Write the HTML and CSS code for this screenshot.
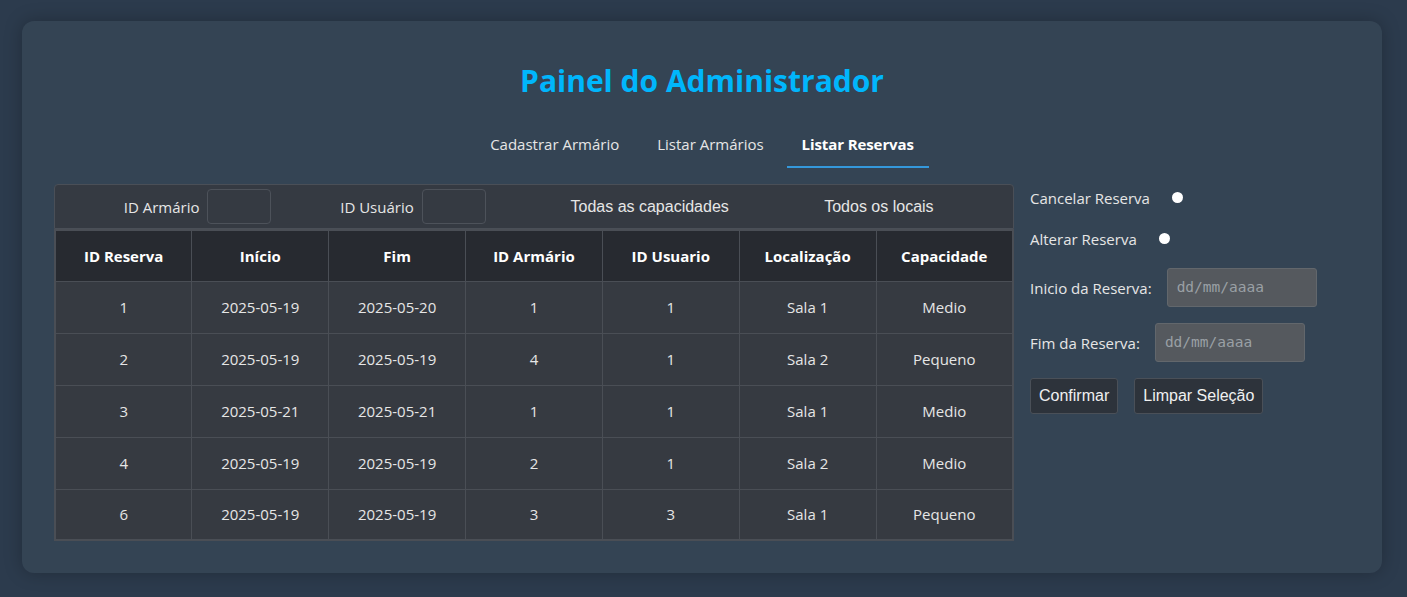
FILE: index.html
```html
<!DOCTYPE html>
<html lang="pt">
<head>
<meta charset="utf-8">
<title>Painel do Administrador</title>
<link rel="stylesheet" href="styles.css">
</head>
<body>
<div class="panel">
  <h1 class="title">Painel do Administrador</h1>
  <nav class="tabs">
    <a class="tab">Cadastrar Armário</a>
    <a class="tab">Listar Armários</a>
    <a class="tab active">Listar Reservas</a>
  </nav>
  <div class="content">
    <div class="table-wrap">
      <div class="filters">
        <div class="field"><span>ID Armário</span><input class="num" type="text"></div>
        <div class="field"><span>ID Usuário</span><input class="num" type="text"></div>
        <select class="sel"><option>Todas as capacidades</option></select>
        <select class="sel"><option>Todos os locais</option></select>
      </div>
      <table class="grid">
        <thead>
          <tr><th>ID Reserva</th><th>Início</th><th>Fim</th><th>ID Armário</th><th>ID Usuario</th><th>Localização</th><th>Capacidade</th></tr>
        </thead>
        <tbody>
          <tr><td>1</td><td>2025-05-19</td><td>2025-05-20</td><td>1</td><td>1</td><td>Sala 1</td><td>Medio</td></tr>
          <tr><td>2</td><td>2025-05-19</td><td>2025-05-19</td><td>4</td><td>1</td><td>Sala 2</td><td>Pequeno</td></tr>
          <tr><td>3</td><td>2025-05-21</td><td>2025-05-21</td><td>1</td><td>1</td><td>Sala 1</td><td>Medio</td></tr>
          <tr><td>4</td><td>2025-05-19</td><td>2025-05-19</td><td>2</td><td>1</td><td>Sala 2</td><td>Medio</td></tr>
          <tr><td>6</td><td>2025-05-19</td><td>2025-05-19</td><td>3</td><td>3</td><td>Sala 1</td><td>Pequeno</td></tr>
        </tbody>
      </table>
    </div>
    <aside class="side">
      <label class="row"><span>Cancelar Reserva</span><span class="radio"></span></label>
      <label class="row row-last"><span>Alterar Reserva</span><span class="radio"></span></label>
      <label class="row date-row"><span>Inicio da Reserva:</span><span class="date">dd/mm/aaaa</span></label>
      <label class="row date-row"><span>Fim da Reserva:</span><span class="date">dd/mm/aaaa</span></label>
      <div class="buttons">
        <button class="btn">Confirmar</button>
        <button class="btn">Limpar Seleção</button>
      </div>
    </aside>
  </div>
</div>
</body>
</html>
```
FILE: styles.css
```css
* { box-sizing: border-box; }
html, body { height: 100%; }
body {
  margin: 0;
  padding: 21px 0;
  background: #2c3b4d;
  font-family: "Open Sans", "Noto Sans", sans-serif;
  color: #e6e6e6;
}
.panel {
  width: 1360px;
  margin: 0 auto 0 22px;
  background: #344454;
  border-radius: 12px;
  box-shadow: 0 0 18px rgba(0,0,0,0.25);
  padding: 40px 32px 32px;
}
.title {
  margin: 0;
  text-align: center;
  color: #00b6fc;
  font-size: 30px;
  font-weight: 700;
  line-height: 40px;
}
.tabs {
  display: flex;
  justify-content: center;
  margin-top: 23px;
  margin-bottom: 16px;
}
.tab {
  padding: 0 15px;
  margin: 0 4px;
  height: 44px;
  line-height: 40px;
  font-size: 15px;
  color: #e6e6e6;
  border-bottom: 2px solid transparent;
}
.tab.active {
  font-weight: 700;
  color: #fff;
  letter-spacing: -0.1px;
  border-bottom-color: #3498db;
}
.content {
  display: flex;
  gap: 16px;
  align-items: flex-start;
}
.table-wrap { width: 960px; }
.filters {
  display: flex;
  justify-content: space-evenly;
  align-items: center;
  height: 45px;
  background: #353a42;
  border: 1px solid #4a4f57;
  border-radius: 4px 4px 0 0;
  font-size: 15px;
}
.field { display: flex; align-items: center; gap: 8px; }
.num {
  width: 64px;
  height: 35px;
  background: #353a42;
  border: 1px solid #4d525a;
  border-radius: 4px;
}
.sel {
  appearance: none;
  -webkit-appearance: none;
  background: transparent;
  border: none;
  color: #e6e6e6;
  font-family: "Liberation Sans", Arial, sans-serif;
  font-size: 16px;
  padding: 0 10px 0 16px;
}
.grid {
  width: 960px;
  border-collapse: collapse;
  table-layout: fixed;
  border: 2px solid #4a4e55;
  font-size: 15px;
}
.grid th, .grid td {
  border: 1px solid #4a4e55;
  text-align: center;
  height: 52px;
  padding: 0;
}
.grid th {
  height: 51px;
  background: #272a30;
  color: #fff;
  font-weight: 700;
}
.grid td {
  background: #363a41;
  color: #e6e6e6;
}
.grid tbody tr:last-child td { height: 51px; }
.side {
  display: flex;
  flex-direction: column;
  align-items: flex-start;
  font-size: 15px;
}
.row {
  display: flex;
  align-items: center;
  gap: 22px;
  height: 27px;
  margin-bottom: 14px;
}
.row-last { margin-bottom: 16px; }
.radio {
  width: 11px;
  height: 11px;
  border-radius: 50%;
  background: #fff;
}
.date-row { gap: 15px; height: 39px; margin-bottom: 16px; }
.date {
  display: inline-block;
  width: 150px;
  height: 39px;
  line-height: 37px;
  padding: 0 9px;
  background: #55595e;
  border: 1px solid #62676c;
  border-radius: 3px;
  font-family: "DejaVu Sans Mono", monospace;
  font-size: 14.5px;
  color: #9aa0a5;
}
.buttons { display: flex; gap: 16px; }
.btn {
  height: 36px;
  padding: 0 8px;
  background: #2d333b;
  border: 1px solid #4a5058;
  border-radius: 3px;
  color: #f0f0f0;
  font-family: "Liberation Sans", Arial, sans-serif;
  font-size: 16px;
}
```
